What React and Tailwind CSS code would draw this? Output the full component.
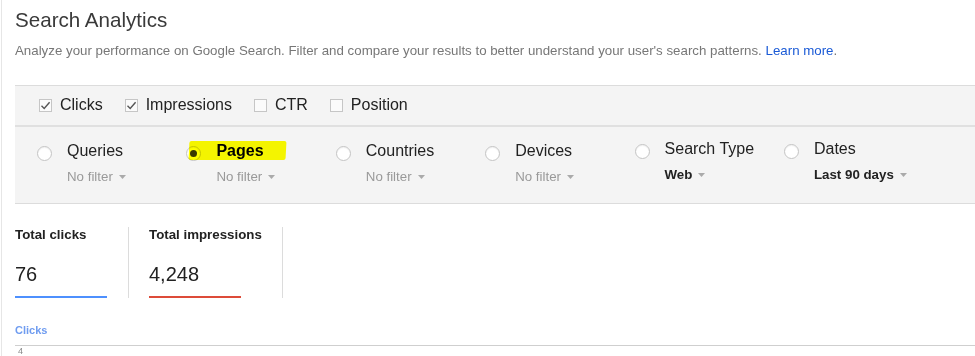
import React from "react";

function Check({ checked }) {
  return (
    <span className="inline-flex w-[13px] h-[13px] border border-[#c6c6c6] bg-[#fbfbfb] items-center justify-center shrink-0 mt-[1px]">
      {checked && (
        <svg width="11" height="11" viewBox="0 0 11 11">
          <path d="M1.5 5.8 L4.2 8.4 L9.6 2.2" fill="none" stroke="#555" strokeWidth="1.4" />
        </svg>
      )}
    </span>
  );
}

function Caret() {
  return (
    <svg width="7" height="4" viewBox="0 0 7 4" className="ml-[6px] shrink-0">
      <path d="M0 0H7L3.5 4Z" fill="#aaa" />
    </svg>
  );
}

function Radio({ selected }) {
  return (
    <span className="mt-[5px] w-[15px] h-[15px] rounded-full border border-[#c4c4c4] bg-white flex items-center justify-center shrink-0 shadow-[inset_0_1px_1px_rgba(0,0,0,0.06)]">
      {selected && <span className="w-[7px] h-[7px] rounded-full bg-[#3a3a3a]" />}
    </span>
  );
}

function Dim({ label, value, selected, bold, shift }) {
  return (
    <div className={`w-[149.4px] shrink-0 flex items-start ${shift ? "-mt-[2px]" : ""}`}>
      <div className="relative flex items-start">
        {selected && (
          <span className="absolute left-[3px] top-[0px] w-[97px] h-[19px] bg-[#ffff00] mix-blend-multiply rounded-[2px] -skew-x-3" />
        )}
        <Radio selected={selected} />
        <div className="ml-[15px] flex flex-col">
          <span className={`text-[16px] leading-[20px] ${selected ? "font-bold text-black" : "text-[#222]"}`}>
            {label}
          </span>
          <span className={`mt-[8px] flex items-center text-[13.3px] leading-[16px] ${bold ? "font-bold text-[#222]" : "text-[#999]"}`}>
            {value}
            <Caret />
          </span>
        </div>
      </div>
    </div>
  );
}

export default function App() {
  return (
    <div className="w-[975px] h-[356px] overflow-hidden bg-white font-['Liberation_Sans',Arial,sans-serif]">
      <div className="ml-[1px] h-full border-l border-[#e6e6e6] pl-[13px] pt-[8px]">
        <h1 className="text-[20.6px] leading-[24px] text-[#3a3a3a] font-normal">Search Analytics</h1>
        <p className="mt-[11px] text-[13.3px] leading-[16px] text-[#777]">
          Analyze your performance on Google Search. Filter and compare your results to better understand your user's search patterns.{" "}
          <span className="text-[#1a5ad6]">Learn more</span>.
        </p>

        <div className="mt-[26px] bg-[#f4f4f4] border-t border-b border-[#dcdcdc]">
          <div className="flex items-center pl-[24px] pt-[9px] pb-[10px] gap-[22px] text-[16px] leading-[20px] text-[#222]">
            {[
              ["Clicks", true],
              ["Impressions", true],
              ["CTR", false],
              ["Position", false],
            ].map(([l, c]) => (
              <label key={l} className="flex items-center gap-[8px]">
                <Check checked={c} />
                <span>{l}</span>
              </label>
            ))}
          </div>
          <div className="h-[2px] bg-[#e0e0e0]" />
          <div className="flex items-start pl-[22px] pt-[14px] pb-[18px]">
            <Dim label="Queries" value="No filter" />
            <Dim label="Pages" value="No filter" selected />
            <Dim label="Countries" value="No filter" />
            <Dim label="Devices" value="No filter" />
            <Dim label="Search Type" value="Web" bold shift />
            <Dim label="Dates" value="Last 90 days" bold shift />
          </div>
        </div>

        <div className="mt-[23px] flex items-stretch">
          <div className="pr-[21px] border-r border-[#dcdcdc]">
            <div className="min-w-[92px]">
              <div className="text-[13.3px] leading-[16px] font-bold text-[#222]">Total clicks</div>
              <div className="mt-[19px] text-[20px] leading-[24px] text-[#222]">76</div>
              <div className="mt-[10px] h-[2px] w-[92px] bg-[#4d90fe]" />
            </div>
          </div>
          <div className="pl-[20px] pr-[20px] border-r border-[#dcdcdc]">
            <div className="min-w-[92px]">
              <div className="text-[13.3px] leading-[16px] font-bold text-[#222]">Total impressions</div>
              <div className="mt-[19px] text-[20px] leading-[24px] text-[#222]">4,248</div>
              <div className="mt-[10px] h-[2px] w-[92px] bg-[#dd4b39]" />
            </div>
          </div>
        </div>

        <div className="mt-[25px] text-[11px] leading-[14px] font-bold text-[#6f9cf0]">Clicks</div>
        <div className="mt-[8px] border-t border-[#cfcfcf]">
          <div className="pl-[3px] text-[9px] leading-[10px] text-[#888]">4</div>
        </div>
      </div>
    </div>
  );
}
